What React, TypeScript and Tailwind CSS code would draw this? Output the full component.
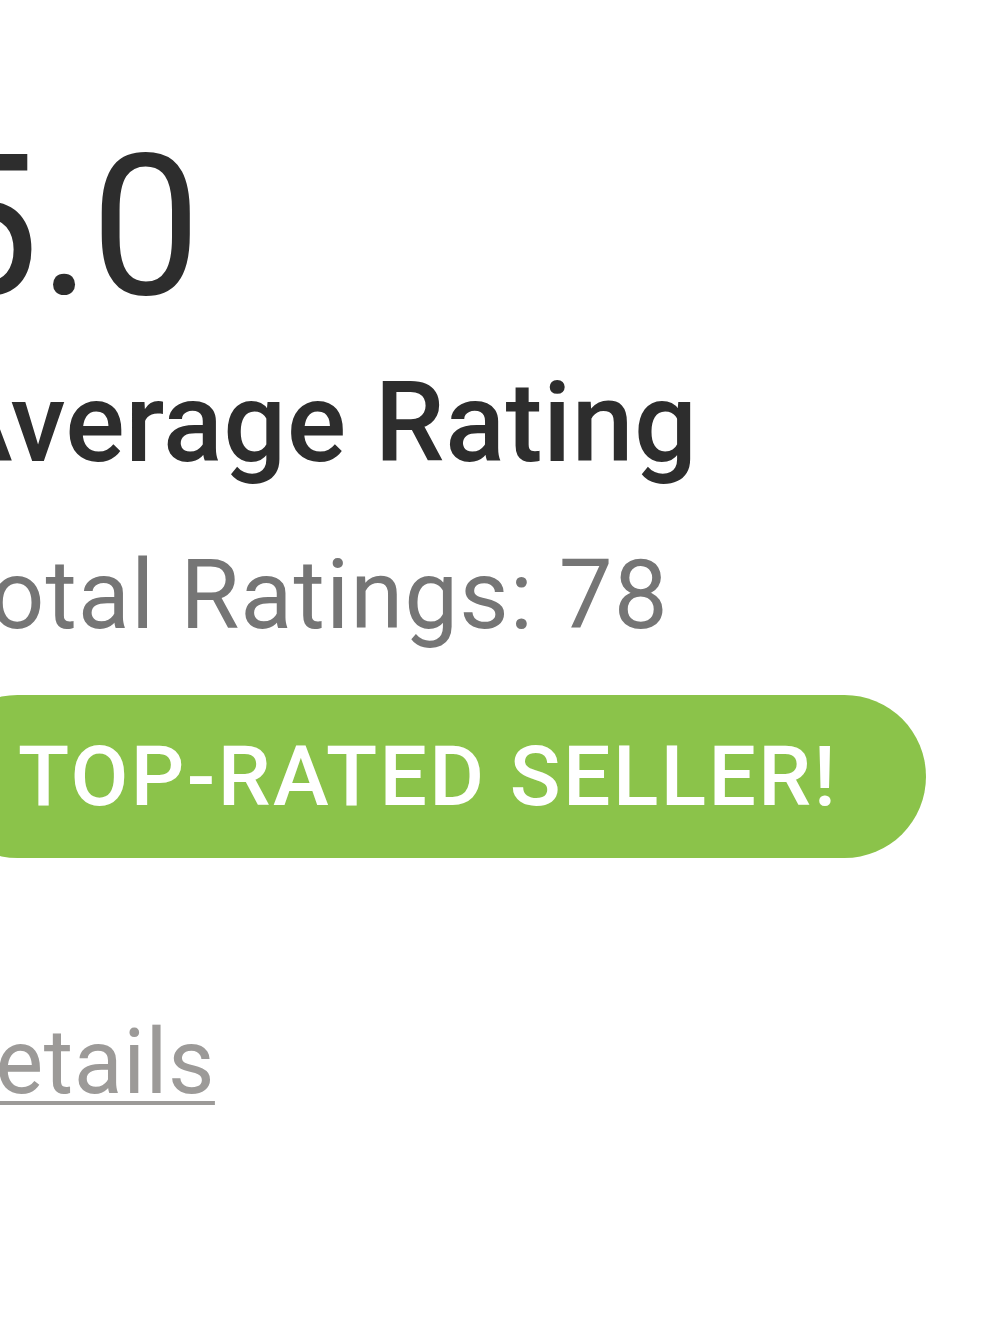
export default function App() {
    return (
        <div className="min-h-[1333px] w-[1000px] overflow-hidden bg-white font-['Roboto',sans-serif]">
            <div className="ml-[-64px] pt-[129px] flex flex-col items-start">
                <span className="ml-[-7px] text-[196px] leading-none font-normal text-[#2d2d2d]">5.0</span>
                <span className="ml-[3px] mt-[43px] text-[111px] leading-none font-medium tracking-[0.5px] text-[#2d2d2d]">Average Rating</span>
                <span className="mt-[68px] text-[96px] leading-none font-normal tracking-[1px] text-[#757575]">Total Ratings: 78</span>
                <div className="mt-[52px] h-[163px] flex items-center rounded-full bg-[#8bc34a] pl-[82px] pr-[88px]">
                    <span className="text-[84px] leading-none font-medium tracking-[2.4px] text-white">TOP-RATED SELLER!</span>
                </div>
                <a href="#" className="mt-[160px] text-[90px] leading-none font-normal tracking-[0.5px] text-[#9c9a98] underline decoration-[4px] underline-offset-[8px]">Details</a>
            </div>
        </div>
    )
}
